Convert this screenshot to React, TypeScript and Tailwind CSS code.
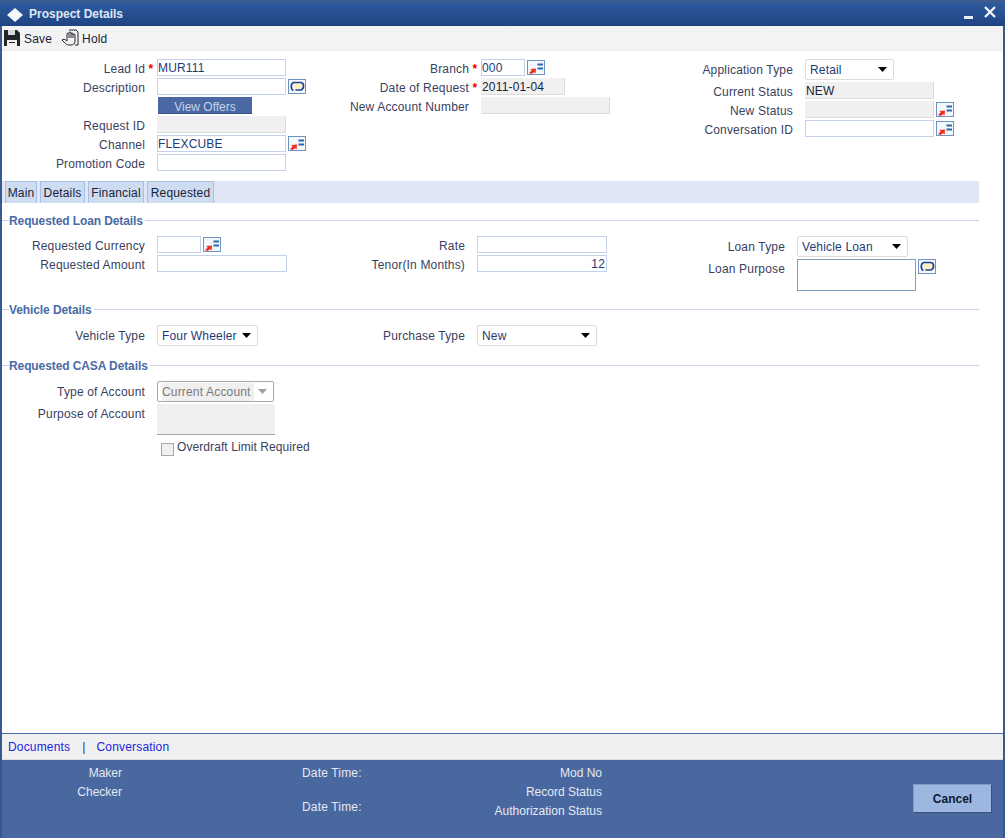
import type { ReactNode } from "react";

const inputBorder = "border border-[#c3d2ea]";

function LookupIcon() {
  return (
    <span className="flex h-[15px] w-[18px] shrink-0 items-center justify-center border border-[#6f93bf] bg-[#f4f7fc]">
      <svg width="16" height="13" viewBox="0 0 16 13">
        <path d="M1 12 L3.6 9.4 L2.4 8 L8 7.4 L7.6 12.6 L6.2 11.2 L3.4 13 Z" fill="#f0301c" />
        <rect x="9.5" y="2.5" width="5.5" height="2" fill="#2a68b0" />
        <rect x="9.5" y="6.5" width="5.5" height="2" fill="#2a68b0" />
      </svg>
    </span>
  );
}

function CommentIcon() {
  return (
    <span className="flex h-[15px] w-[18px] shrink-0 items-center justify-center border border-[#6f93bf] bg-[#f7f9fd]">
      <svg width="15" height="12" viewBox="0 0 15 12">
        <path d="M4 1.5 H11 C14.4 2 14.4 8 11 9 H5 L4 10.5" fill="#fbf0c4" />
        <path
          d="M3.4 9.6 C0.4 8 0.6 2 4 1.5 H11 C14.4 2 14.4 8 11 9 H5.4"
          fill="none"
          stroke="#1c3f9c"
          strokeWidth="1.7"
        />
      </svg>
    </span>
  );
}

function Label({
  width,
  star,
  tall,
  children,
}: {
  width: string;
  star?: boolean;
  tall?: boolean;
  children: ReactNode;
}) {
  const shift = tall ? "pt-[2px]" : "pt-[4px]";
  return (
    <>
      <span className={`${width} ${shift} shrink-0 text-right text-[#3a4160]`}>{children}</span>
      <span className={`${shift} w-[12px] shrink-0 text-center font-bold text-[#f00000]`}>{star ? "*" : ""}</span>
    </>
  );
}

function TextBox({
  width,
  value,
  readOnly,
  right,
}: {
  width: string;
  value?: string;
  readOnly?: boolean;
  right?: boolean;
}) {
  return (
    <span
      className={`${width} flex h-[17px] shrink-0 items-center pt-[2px] ${
        readOnly
          ? "border-b border-r border-[#dcdcdc] bg-[#f0f0f0] pl-[1px] text-[#1a2238]"
          : `${inputBorder} bg-white text-[#1c3a78]`
      } ${right ? "justify-end pr-[1px]" : ""}`}
    >
      {value}
    </span>
  );
}

function Select({ width, value, disabled }: { width: string; value: string; disabled?: boolean }) {
  return (
    <span
      className={`${width} flex h-[21px] shrink-0 items-center justify-between rounded-[2px] border pl-[4px] pr-[6px] ${
        disabled
          ? "border-[#a8a8a8] bg-white text-[#7a7a7a]"
          : "border-[#dcdcdc] bg-white text-[#1c3a78]"
      }`}
    >
      <span className={disabled ? "bg-[#f0f0f0] pr-[3px] pt-[1px]" : "pt-[2px]"}>{value}</span>
      <svg width="9" height="5" viewBox="0 0 9 5">
        <path d="M0 0 H9 L4.5 5 Z" fill={disabled ? "#a0a0a0" : "#000"} />
      </svg>
    </span>
  );
}

function Row({ children, tall }: { children: ReactNode; tall?: boolean }) {
  return <div className={`flex items-center ${tall ? "h-[21px]" : "h-[17px]"}`}>{children}</div>;
}

function SectionTitle({ children }: { children: string }) {
  return (
    <div className="flex h-[17px] w-[977px] items-center">
      <span className="h-px w-[7px] bg-[#c8d3ee]" />
      <span className="pt-[1px] font-bold tracking-[-0.1px] text-[#4a6aa5]">{children}</span>
      <span className="ml-[2px] h-px flex-1 bg-[#c8d3ee]" />
    </div>
  );
}

const tabs = [
  { name: "Main", width: "w-[32px]" },
  { name: "Details", width: "w-[45px]" },
  { name: "Financial", width: "w-[56px]" },
  { name: "Requested", width: "w-[67px]" },
];

export default function App() {
  return (
    <div
      className="h-[838px] w-[1007px] overflow-hidden bg-white text-[12px] leading-[17px] tracking-[0.17px]"
      style={{ fontFamily: '"Liberation Sans", Arial, sans-serif' }}
    >
      <div className="flex h-full w-[1005px] flex-col border-x-2 border-[#38598f]">
        {/* title bar */}
        <div className="-mx-[2px] flex h-[26px] shrink-0 items-center border-t-[3px] border-[#3d5c92] bg-gradient-to-b from-[#2e5a9e] to-[#1f4483] pl-[7px] pr-[9px] tracking-normal">
          <svg width="16" height="14" viewBox="0 0 16 14" className="shrink-0">
            <path d="M8 0 L16 7 L8 14 L0 7 Z" fill="#f4f7fc" />
          </svg>
          <span className="ml-[6px] font-bold text-[#dfe7f5]">Prospect Details</span>
          <span className="ml-auto mt-[5px] h-[3px] w-[9px] bg-[#e8eef8]" />
          <svg width="12" height="12" viewBox="0 0 12 12" className="mb-[6px] ml-[11px]">
            <path d="M1 1 L11 11 M11 1 L1 11" stroke="#eef3fa" strokeWidth="2.4" />
          </svg>
        </div>

        {/* toolbar */}
        <div className="flex h-[25px] shrink-0 items-center border-b border-[#ececec] bg-[#f3f3f3] pl-[2px] text-[#1a2238]">
          <svg width="16" height="16" viewBox="0 0 16 16" className="shrink-0">
            <path d="M0 0 H13 L16 3 V16 H0 Z" fill="#22262c" />
            <rect x="4" y="0" width="7" height="5" fill="#d8dade" />
            <rect x="3" y="10" width="10" height="6" fill="#f0f0f0" />
            <rect x="5" y="12" width="6" height="1" fill="#22262c" />
          </svg>
          <span className="ml-[4px] pt-[2px]">Save</span>
          <svg width="18" height="18" viewBox="0 0 18 18" className="ml-[9px] shrink-0" fill="none" stroke="#22262c" strokeWidth="1">
            <path d="M8 1 H15 L17 3 V16 H14" />
            <path d="M6 12 V5 a1 1 0 0 1 2 0 V9 M8 4 a1 1 0 0 1 2 0 V9 M10 5 a1 1 0 0 1 2 0 V9 M12 6 a1 1 0 0 1 2 0 V12 c0 3 -2 4 -4 4 H8 c-2 0 -3 -1 -4 -2 L1 11 c1 -1 3 -1 5 1" />
          </svg>
          <span className="ml-[3px] pt-[2px]">Hold</span>
        </div>

        {/* header fields */}
        <div className="grid h-[130px] shrink-0 grid-cols-[318px_340px_1fr] pt-[8px]">
          <div className="flex flex-col gap-[2px]">
            <Row>
              <Label width="w-[143px]" star>Lead Id</Label>
              <TextBox width="w-[129px]" value="MUR111" />
            </Row>
            <Row>
              <Label width="w-[143px]">Description</Label>
              <TextBox width="w-[129px]" />
              <span className="ml-[2px]"><CommentIcon /></span>
            </Row>
            <Row>
              <span className="ml-[156px] flex h-[17px] w-[94px] items-center justify-center border-b border-[#39527f] bg-[#4a68a3] pt-[5px] tracking-normal text-[#c9d3e6]">
                View Offers
              </span>
            </Row>
            <Row>
              <Label width="w-[143px]">Request ID</Label>
              <TextBox width="w-[129px]" readOnly />
            </Row>
            <Row>
              <Label width="w-[143px]">Channel</Label>
              <TextBox width="w-[129px]" value="FLEXCUBE" />
              <span className="ml-[2px]"><LookupIcon /></span>
            </Row>
            <Row>
              <Label width="w-[143px]">Promotion Code</Label>
              <TextBox width="w-[129px]" />
            </Row>
          </div>

          <div className="flex flex-col gap-[2px]">
            <Row>
              <Label width="w-[149px]" star>Branch</Label>
              <TextBox width="w-[44px]" value="000" />
              <span className="ml-[2px]"><LookupIcon /></span>
            </Row>
            <Row>
              <Label width="w-[149px]" star>Date of Request</Label>
              <TextBox width="w-[84px]" value="2011-01-04" readOnly />
            </Row>
            <Row>
              <Label width="w-[149px]">New Account Number</Label>
              <TextBox width="w-[129px]" readOnly />
            </Row>
          </div>

          <div className="flex flex-col gap-[2px]">
            <Row tall>
              <Label width="w-[133px]" tall>Application Type</Label>
              <Select width="w-[89px]" value="Retail" />
            </Row>
            <Row>
              <Label width="w-[133px]">Current Status</Label>
              <TextBox width="w-[129px]" value="NEW" readOnly />
            </Row>
            <Row>
              <Label width="w-[133px]">New Status</Label>
              <TextBox width="w-[129px]" readOnly />
              <span className="ml-[2px]"><LookupIcon /></span>
            </Row>
            <Row>
              <Label width="w-[133px]">Conversation ID</Label>
              <TextBox width="w-[129px]" />
              <span className="ml-[2px]"><LookupIcon /></span>
            </Row>
          </div>
        </div>

        {/* tabs */}
        <div className="flex h-[22px] w-[977px] shrink-0 items-stretch gap-[3px] bg-[#e0e6f5] pl-[3px]">
          {tabs.map((tab) => (
            <span
              key={tab.name}
              className={`${tab.width} flex items-center justify-center border-x border-t border-[#a9bfe0] bg-[#cddcf0] pt-[2px] text-[#1a2238]`}
            >
              {tab.name}
            </span>
          ))}
        </div>

        {/* requested loan */}
        <div className="mt-[9px] shrink-0">
          <SectionTitle>Requested Loan Details</SectionTitle>
          <div className="mt-[7px] grid h-[55px] grid-cols-[318px_320px_1fr]">
            <div className="flex flex-col gap-[2px]">
              <Row>
                <Label width="w-[143px]">Requested Currency</Label>
                <TextBox width="w-[44px]" />
                <span className="ml-[2px]"><LookupIcon /></span>
              </Row>
              <Row>
                <Label width="w-[143px]">Requested Amount</Label>
                <TextBox width="w-[130px]" />
              </Row>
            </div>
            <div className="flex flex-col gap-[2px]">
              <Row>
                <Label width="w-[145px]">Rate</Label>
                <TextBox width="w-[130px]" />
              </Row>
              <Row>
                <Label width="w-[145px]">Tenor(In Months)</Label>
                <TextBox width="w-[130px]" value="12" right />
              </Row>
            </div>
            <div className="flex flex-col gap-[2px]">
              <Row tall>
                <Label width="w-[145px]" tall>Loan Type</Label>
                <Select width="w-[111px]" value="Vehicle Loan" />
              </Row>
              <div className="flex items-start">
                <Label width="w-[145px]" tall>Loan Purpose</Label>
                <span className="h-[32px] w-[119px] shrink-0 border border-[#7f9fc6] bg-white" />
                <span className="ml-[2px]"><CommentIcon /></span>
              </div>
            </div>
          </div>
        </div>

        {/* vehicle */}
        <div className="mt-[10px] shrink-0">
          <SectionTitle>Vehicle Details</SectionTitle>
          <div className="mt-[7px] grid grid-cols-[318px_320px_1fr]">
            <Row tall>
              <Label width="w-[143px]" tall>Vehicle Type</Label>
              <Select width="w-[101px]" value="Four Wheeler" />
            </Row>
            <Row tall>
              <Label width="w-[145px]" tall>Purchase Type</Label>
              <Select width="w-[120px]" value="New" />
            </Row>
          </div>
        </div>

        {/* casa */}
        <div className="mt-[11px] shrink-0">
          <SectionTitle>Requested CASA Details</SectionTitle>
          <div className="mt-[7px] flex flex-col gap-[2px]">
            <Row tall>
              <Label width="w-[143px]" tall>Type of Account</Label>
              <Select width="w-[117px]" value="Current Account" disabled />
            </Row>
            <div className="flex items-start">
              <Label width="w-[143px]" tall>Purpose of Account</Label>
              <span className="h-[31px] w-[118px] border-b border-[#a8a8a8] bg-[#f0f0f0]" />
            </div>
            <div className="mt-[2px] flex items-start pl-[159px]">
              <span className="mt-[4px] h-[13px] w-[13px] border border-[#a8a8a8] bg-[#f0f0f0]" />
              <span className="ml-[3px] tracking-[0.08px] text-[#3a4160]">Overdraft Limit Required</span>
            </div>
          </div>
        </div>

        <div className="flex-1" />

        {/* footer links */}
        <div className="flex h-[26px] shrink-0 items-center border-t border-[#4a68ac] bg-[#f0f0f0] pl-[6px] pt-[2px] text-[#2323dc]">
          <span>Documents</span>
          <span className="ml-[12px]">|</span>
          <span className="ml-[11px]">Conversation</span>
        </div>

        {/* audit bar */}
        <div className="flex h-[79px] shrink-0 border-t border-[#d8dde6] bg-[#4a68a0] pt-[4px] leading-[19px] tracking-normal text-[#e4e9f4]">
          <div className="w-[120px] text-right">
            <div>Maker</div>
            <div>Checker</div>
          </div>
          <div className="ml-[180px] w-[60px] tracking-[0.17px]">
            <div>Date Time:</div>
            <div className="mt-[15px]">Date Time:</div>
          </div>
          <div className="w-[240px] text-right">
            <div>Mod No</div>
            <div>Record Status</div>
            <div>Authorization Status</div>
          </div>
          <button className="ml-[311px] mt-[20px] h-[29px] w-[79px] border-b border-r border-b-[#3a4f78] border-r-[#3a4f78] border-l border-t border-l-[#7e9ccb] border-t-[#7e9ccb] bg-[#9db8e0] pt-[2px] font-bold text-[#0d1a33]">
            Cancel
          </button>
        </div>
      </div>
    </div>
  );
}
